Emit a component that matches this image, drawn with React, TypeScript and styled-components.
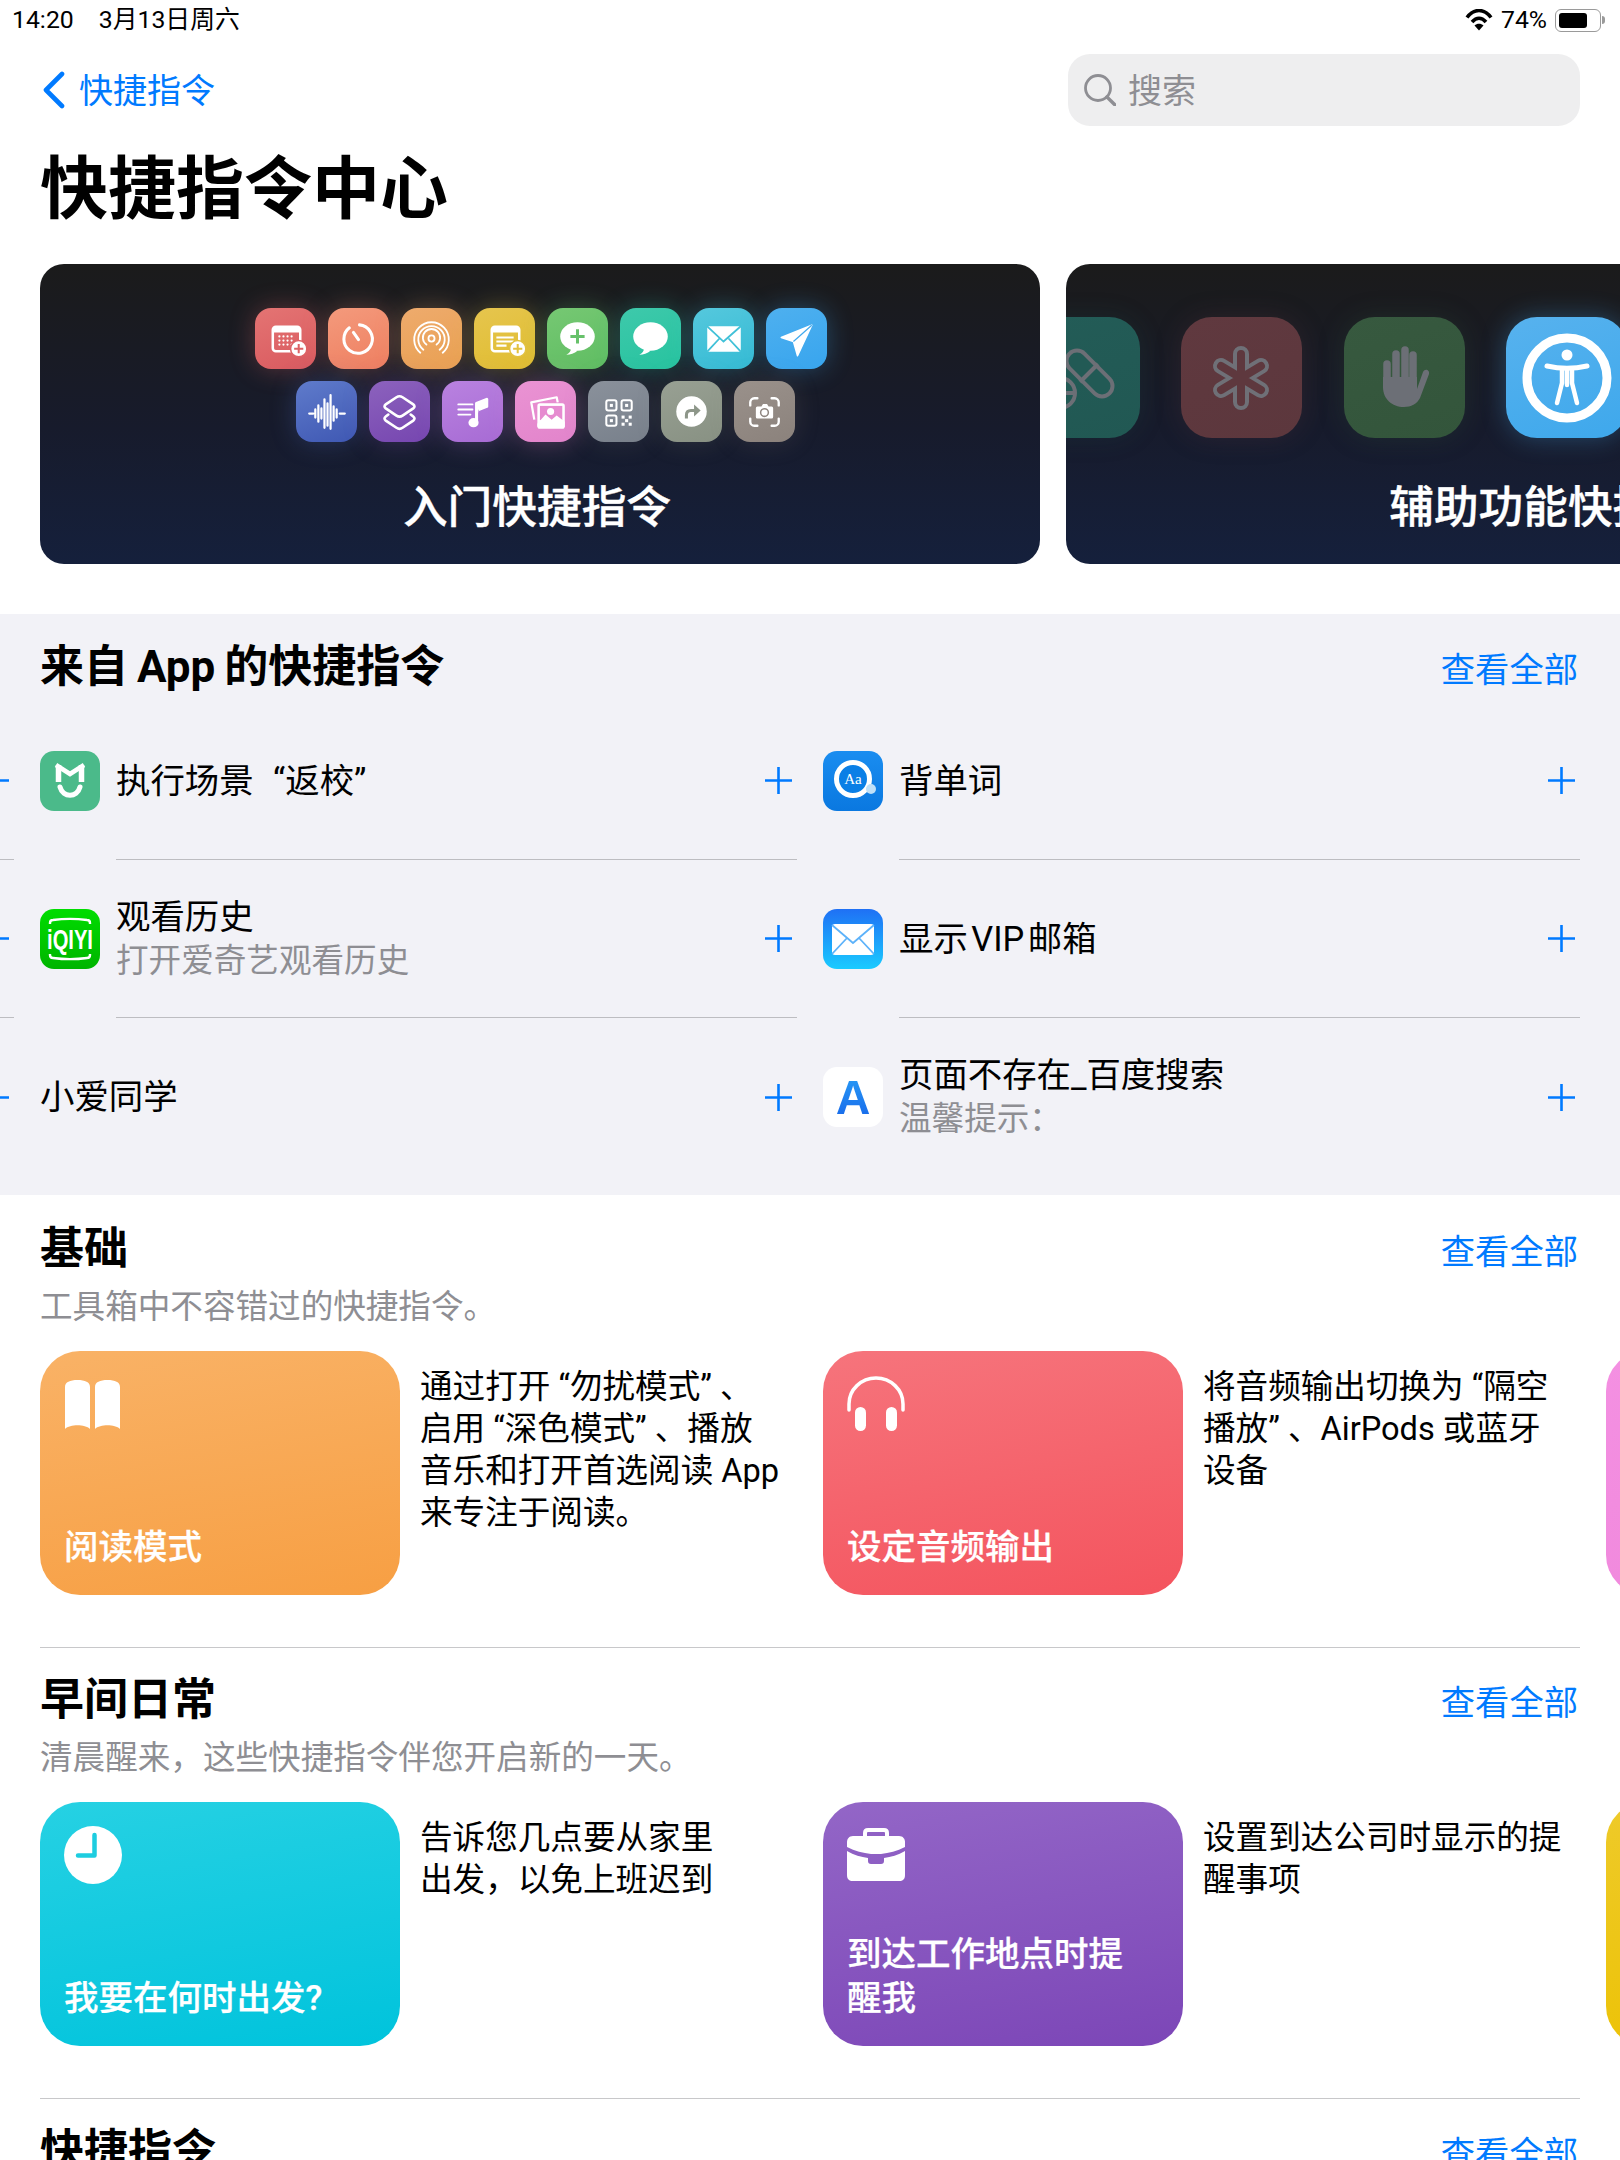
import styled, { createGlobalStyle } from "styled-components";
import type { ReactNode } from "react";

const FONT = `"Roboto", "Noto Sans CJK SC", sans-serif`;
const BLUE = "#007aff";

const GlobalStyle = createGlobalStyle`
  html, body { margin: 0; padding: 0; background: #fff; }
  body { font-family: ${FONT}; color: #000; }
  * { box-sizing: border-box; }
`;

/* ---------- small tile glyphs (60 x 60) ---------- */

const Glyph = ({ children, vb = 60 }: { children: ReactNode; vb?: number }) => (
  <svg width="100%" height="100%" viewBox={`0 0 ${vb} ${vb}`} fill="none" stroke="none">
    {children}
  </svg>
);

const CalendarPlus = () => (
  <Glyph>
    <rect x="17.5" y="18.5" width="27" height="24" rx="3" stroke="#fff" strokeWidth="2.5" />
    <path d="M17 22a4 4 0 0 1 4-4h20a4 4 0 0 1 4 4v2H17z" fill="#fff" />
    {[24, 28, 32, 36].map((x) =>
      [28, 32, 36].map((y) => <circle key={`${x}-${y}`} cx={x} cy={y} r="1.1" fill="#fff" />)
    )}
    <circle cx="43" cy="40" r="8" fill="#fff" stroke="#dd6265" strokeWidth="1.5" />
    <path d="M43 35.5v9M38.5 40h9" stroke="#dd6265" strokeWidth="2" />
  </Glyph>
);

const Timer = () => (
  <Glyph>
    <path d="M31 16.6A14 14 0 1 1 21 19.5" stroke="#fff" strokeWidth="3" strokeLinecap="round" />
    <path d="M30 31l-5-7" stroke="#fff" strokeWidth="3" strokeLinecap="round" />
  </Glyph>
);

const Airdrop = () => (
  <Glyph>
    <circle cx="30" cy="30" r="3" stroke="#fff" strokeWidth="1.8" />
    <path d="M25 36a8.5 8.5 0 1 1 10 0" stroke="#fff" strokeWidth="1.8" strokeLinecap="round" />
    <path d="M22 41a13 13 0 1 1 16 0" stroke="#fff" strokeWidth="1.8" strokeLinecap="round" />
    <path d="M19 44a17 17 0 1 1 22 0" stroke="#fff" strokeWidth="1.8" strokeLinecap="round" />
  </Glyph>
);

const NotePlus = () => (
  <Glyph>
    <rect x="17.5" y="18.5" width="27" height="24" rx="3" stroke="#fff" strokeWidth="2.5" />
    <path d="M17 22a4 4 0 0 1 4-4h20a4 4 0 0 1 4 4v2H17z" fill="#fff" />
    <path d="M22 29h17M22 33h17M22 37h10" stroke="#fff" strokeWidth="2" />
    <circle cx="43" cy="40" r="8" fill="#fff" stroke="#e3c23f" strokeWidth="1.5" />
    <path d="M43 35.5v9M38.5 40h9" stroke="#e3c23f" strokeWidth="2" />
  </Glyph>
);

const Bubble = ({ plus }: { plus?: boolean }) => (
  <Glyph>
    <ellipse cx="30" cy="28" rx="17" ry="14" fill="#fff" />
    <path d="M24 39c-.5 3-2 5.500-5 7 4 0 8-1.500 11-4z" fill="#fff" />
    {plus && <path d="M30 21v14M23 28h14" stroke="#67c16a" strokeWidth="3" />}
  </Glyph>
);

const Envelope = () => (
  <Glyph>
    <rect x="14" y="18" width="33" height="25" rx="1.500" fill="#fff" />
    <path d="M14 18l16 15 17-15M14 43l12-13M47 43L35 30" stroke="#41c1d8" strokeWidth="1.800" />
  </Glyph>
);

const Plane = () => (
  <Glyph>
    <path d="M45 17L15 29l12 4 4 14z" fill="#fff" stroke="#fff" strokeWidth="1.500" strokeLinejoin="round" />
    <path d="M45 17L27 33" stroke="#40a9ee" strokeWidth="1.200" />
  </Glyph>
);

const Waveform = () => (
  <Glyph>
    <path
      d="M13 32h4M19 28v8M22 24v16M25 27v10M28 18v28M31 22v22M34 14v33M37 25v14M40 28v8M43 32h5"
      stroke="#fff"
      strokeWidth="2.200"
      strokeLinecap="round"
    />
  </Glyph>
);

const Layers = () => (
  <Glyph>
    <path
      d="M19 33l-2.500 2Q14 37 16.500 39L27 46Q30 48 33 46L43.500 39Q46 37 43.500 35L41 33"
      stroke="#fff"
      strokeWidth="2.600"
      strokeLinecap="round"
    />
    <path
      d="M27 16Q30 14 33 16L43.500 23Q46 25 43.500 27L33 34Q30 36 27 34L16.500 27Q14 25 16.500 23Z"
      stroke="#fff"
      strokeWidth="2.600"
    />
  </Glyph>
);

const MusicList = () => (
  <Glyph>
    <path d="M16 23h14M16 28h14M16 33h12" stroke="#fff" strokeWidth="1.800" strokeLinecap="round" />
    <path d="M34 40V22l10-4v7l-8 3" stroke="#fff" strokeWidth="3" strokeLinejoin="round" fill="#fff" />
    <ellipse cx="31" cy="41" rx="5" ry="4.500" fill="#fff" />
  </Glyph>
);

const Photos = () => (
  <Glyph>
    <path d="M19 38l-3-17 25-5 1 5" stroke="#fff" strokeWidth="2.200" strokeLinejoin="round" />
    <rect x="22" y="22" width="27" height="25" rx="2.500" fill="#fff" />
    <rect x="24.500" y="24.500" width="22" height="14" fill="#e68bd0" />
    <path d="M22 42l8-9 6 5 5-4 8 6v5H22z" fill="#fff" />
    <circle cx="35" cy="30" r="3.500" fill="#fff" />
  </Glyph>
);

const QrCode = () => (
  <Glyph>
    <g stroke="#fff" strokeWidth="2">
      <rect x="18" y="19" width="10" height="10" rx="2" />
      <rect x="33" y="19" width="10" height="10" rx="2" />
      <rect x="18" y="34" width="10" height="10" rx="2" />
    </g>
    <g fill="#fff">
      <rect x="21.500" y="22.500" width="3" height="3" />
      <rect x="36.500" y="22.500" width="3" height="3" />
      <rect x="21.500" y="37.500" width="3" height="3" />
      <rect x="33" y="34" width="3" height="3" />
      <rect x="40" y="34" width="3" height="3" />
      <rect x="36.500" y="37.500" width="3" height="3" />
      <rect x="33" y="41" width="3" height="3" />
      <rect x="40" y="41" width="3" height="3" />
    </g>
  </Glyph>
);

const ShareCircle = () => (
  <Glyph>
    <circle cx="30" cy="30" r="15" fill="#fff" />
    <path d="M25 37v-3.500c0-3 2-4.500 4.500-4.500H36" stroke="#8d9689" strokeWidth="3" />
    <path d="M32.500 23l6.500 6-6.500 6z" fill="#8d9689" />
  </Glyph>
);

const FaceCamera = () => (
  <Glyph>
    <path
      d="M16 24v-3a4 4 0 0 1 4-4h3M37 17h3a4 4 0 0 1 4 4v3M44 37v3a4 4 0 0 1-4 4h-3M23 44h-3a4 4 0 0 1-4-4v-3"
      stroke="#fff"
      strokeWidth="2.300"
      strokeLinecap="round"
    />
    <path d="M23 25h4l1.500-2.500h4L34 25h3a1.500 1.500 0 0 1 1.500 1.500v9A1.500 1.500 0 0 1 37 37H23a1.500 1.500 0 0 1-1.500-1.500v-9A1.500 1.500 0 0 1 23 25z" fill="#fff" />
    <circle cx="30" cy="31" r="3.800" fill="none" stroke="#8f8680" strokeWidth="1.500" />
  </Glyph>
);

/* ---------- large tile glyphs (121 x 121) ---------- */

const Pills = () => (
  <Glyph vb={121}>
    <path d="M58 44l25 25" stroke="#6c6f76" strokeWidth="25" strokeLinecap="round" />
    <path d="M58 44l25 25" stroke="#225a55" strokeWidth="17" strokeLinecap="round" />
    <path d="M61 65l18-18" stroke="#6c6f76" strokeWidth="4" />
    <circle cx="41" cy="76" r="15" stroke="#6c6f76" strokeWidth="4" />
    <path d="M30 76h24" stroke="#6c6f76" strokeWidth="4" />
  </Glyph>
);

const Asterisk = () => {
  const arms = "M60 37v48M40 49l40 24M40 73l40-24";
  return (
    <Glyph vb={121}>
      <path d={arms} stroke="#6f7077" strokeWidth="16" strokeLinecap="round" />
      <path d={arms} stroke="#5e383e" strokeWidth="8" strokeLinecap="round" />
    </Glyph>
  );
};

const Hand = () => (
  <Glyph vb={121}>
    <path d="M43 65V47M52 60V37M61 60V33M69 62V38" stroke="#6c6f76" strokeWidth="7.500" strokeLinecap="round" />
    <path d="M39 60h34v12l6-17c2-4 7-2 6 2l-9 24c-3 6-9 9-16 9-12 0-21-8-21-20z" fill="#6c6f76" />
  </Glyph>
);

const Accessibility = () => (
  <Glyph vb={121}>
    <circle cx="61" cy="61" r="40" stroke="#fff" strokeWidth="9" />
    <circle cx="61" cy="38" r="5.500" fill="#fff" />
    <path d="M41 49c13 3 27 3 40 0" stroke="#fff" strokeWidth="5" strokeLinecap="round" />
    <path d="M61 52v16M56 52v14l-5 20M66 52v14l5 20" stroke="#fff" strokeWidth="4.500" strokeLinecap="round" />
  </Glyph>
);

/* ---------- app icons (60 x 60) ---------- */

const MiHomeGlyph = () => (
  <Glyph>
    <path d="M16 14l14 9 14-9" stroke="#fff" strokeWidth="4.500" />
    <path d="M18.500 14v17M41.500 14v17" stroke="#fff" strokeWidth="5.500" />
    <path d="M20 36c3 11 17 11 20 0" stroke="#fff" strokeWidth="5" strokeLinecap="round" />
  </Glyph>
);

const IqiyiGlyph = () => (
  <Glyph>
    <path d="M10 15v-1c0-2 1-3 3-3 11-1.500 23-1.500 34 0 2 0 3 1 3 3v1" stroke="#fff" strokeWidth="2.400" />
    <path d="M10 45v1c0 2 1 3 3 3 11 1.500 23 1.500 34 0 2 0 3-1 3-3v-1" stroke="#fff" strokeWidth="2.400" />
    <text
      transform="translate(30 40) scale(.72 1)"
      textAnchor="middle"
      fontFamily="Liberation Sans, sans-serif"
      fontWeight="700"
      fontSize="28"
      fill="#fff"
    >
      iQIYI
    </text>
  </Glyph>
);

const DictGlyph = () => (
  <Glyph>
    <circle cx="30" cy="28" r="16.500" fill="#0a7fe6" stroke="#fff" strokeWidth="5" />
    <circle cx="48" cy="38" r="5" fill="#bfe0f8" />
    <text x="30" y="33" textAnchor="middle" fontFamily="Liberation Serif, serif" fontSize="15" fill="#fff">
      Aa
    </text>
  </Glyph>
);

const MailGlyph = () => (
  <Glyph>
    <rect x="9" y="15" width="42" height="31" rx="3" fill="#fff" />
    <path d="M9 16l21 18 21-18M9 45l15-16M51 45L36 29" stroke="#5cb2fa" strokeWidth="1.800" />
  </Glyph>
);

/* ---------- card glyphs (58 x 58) ---------- */

const Book = () => (
  <Glyph vb={58}>
    <path d="M1 12C1 7 6 5 13.500 5S26 7 26 12v42c-5-5-20-5-25 0z" fill="#fff" />
    <path d="M31 12c0-5 5-7 12.500-7S56 7 56 12v42c-5-5-20-5-25 0z" fill="#fff" />
  </Glyph>
);

const Headphones = () => (
  <Glyph vb={58}>
    <path d="M2 35V29a27 26 0 0 1 54 0v6" stroke="#fff" strokeWidth="3.500" strokeLinecap="round" />
    <rect x="8" y="32" width="11" height="24" rx="5.500" fill="#fff" />
    <rect x="39" y="32" width="11" height="24" rx="5.500" fill="#fff" />
  </Glyph>
);

const Clock = () => (
  <Glyph vb={58}>
    <circle cx="29" cy="29" r="29" fill="#fff" />
    <path d="M30.500 9v20.500H14" stroke="#1dcde0" strokeWidth="4.500" strokeLinecap="round" strokeLinejoin="round" />
  </Glyph>
);

const Briefcase = () => (
  <Glyph vb={58}>
    <path d="M18 14V7c0-2 1-3 3-3h16c2 0 3 1 3 3v7" stroke="#fff" strokeWidth="4" />
    <path d="M0 16c0-3 2-6 6-6h46c4 0 6 3 6 6v5c-8 4-16 6-24 7h-10C16 27 8 25 0 21z" fill="#fff" />
    <path d="M0 25c7 4 14 6 21 7v3c0 2 1 3 3 3h10c2 0 3-1 3-3v-3c7-1 14-3 21-7v24c0 4-2 6-6 6H6c-4 0-6-2-6-6z" fill="#fff" />
  </Glyph>
);

/* ---------- status bar ---------- */

const StatusBar = styled.div`
  height: 40px;
  padding: 0 12px;
  display: flex;
  align-items: center;
  justify-content: space-between;
  font-size: 24.8px;
  line-height: 28px;
`;
const StatusGroup = styled.div`
  display: flex;
  align-items: center;
  gap: 8px;
`;
const DateGroup = styled.div`
  display: flex;
  align-items: baseline;
  gap: 25px;
`;
const Battery = styled.div`
  position: relative;
  width: 46px;
  height: 23px;
  padding: 3px;
  border: 1.5px solid #9a9a9a;
  border-radius: 6px;
  margin-right: 7px;
  &::after {
    content: "";
    position: absolute;
    right: -5px;
    top: 6px;
    width: 3px;
    height: 8px;
    border-radius: 0 3px 3px 0;
    background: #9a9a9a;
  }
`;
const BatteryFill = styled.div<{ $level: number }>`
  width: ${(p) => p.$level}%;
  height: 100%;
  border-radius: 3px;
  background: #000;
`;

/* ---------- navigation ---------- */

const NavBar = styled.div`
  margin-top: 14px;
  padding: 0 40px;
  height: 72px;
  display: flex;
  align-items: center;
  justify-content: space-between;
`;
const BackLink = styled.div`
  display: flex;
  align-items: center;
  gap: 13px;
  padding-left: 2px;
  color: ${BLUE};
  font-size: 34px;
`;
const NavText = styled.span`
  padding-bottom: 3px;
`;
const SearchBox = styled.div`
  width: 512px;
  height: 72px;
  border-radius: 22px;
  background: #eeeeef;
  display: flex;
  align-items: center;
  gap: 12px;
  padding-left: 16px;
  color: #8e8e93;
  font-size: 34px;
`;
const PageTitle = styled.h1`
  margin: 24px 0 34px;
  padding-left: 40px;
  font-size: 68px;
  line-height: 80px;
  font-weight: 700;
`;

/* ---------- banners ---------- */

const BannerRow = styled.div`
  display: flex;
  gap: 26px;
  padding-left: 40px;
  margin-bottom: 50px;
`;
const Banner = styled.div<{ $top: number }>`
  flex: 0 0 1000px;
  height: 300px;
  border-radius: 24px;
  overflow: hidden;
  padding-top: ${(p) => p.$top}px;
  display: flex;
  flex-direction: column;
  align-items: center;
  background: linear-gradient(180deg, #1b1b1b 0%, #171b2c 55%, #15203c 100%);
`;
const TileRow = styled.div<{ $gap: number; $shift?: number }>`
  display: flex;
  justify-content: center;
  gap: ${(p) => p.$gap}px;
  margin-left: ${(p) => p.$shift ?? 0}px;
  margin-bottom: 12px;
`;
const Tile = styled.div<{ $from: string; $to: string; $size: number; $glow: string }>`
  flex: none;
  width: ${(p) => p.$size}px;
  height: ${(p) => p.$size}px;
  border-radius: ${(p) => Math.round(p.$size * 0.26)}px;
  background: linear-gradient(160deg, ${(p) => p.$from}, ${(p) => p.$to});
  box-shadow: 0 0 26px ${(p) => p.$glow};
`;
const BannerTitle = styled.div<{ $top: number; $shift: number }>`
  flex: none;
  margin-top: ${(p) => p.$top}px;
  margin-left: ${(p) => p.$shift}px;
  color: #fff;
  font-size: 44.7px;
  line-height: 56px;
  font-weight: 500;
  -webkit-text-stroke: 0.35px #fff;
  white-space: nowrap;
`;

/* ---------- shared section parts ---------- */

const SectionHead = styled.div`
  display: flex;
  justify-content: space-between;
  align-items: flex-start;
  height: 44px;
`;
const SectionTitle = styled.h2`
  margin: 0;
  padding-top: 1px;
  font-size: 44px;
  line-height: 44px;
  font-weight: 700;
  word-spacing: -2px;
`;
const SeeAll = styled.span`
  padding: 4px 2px 0 0;
  color: ${BLUE};
  font-size: 34.3px;
  line-height: 44px;
`;

/* ---------- app shortcuts ---------- */

const AppSection = styled.section`
  height: 581px;
  padding-top: 30px;
  background: #f2f2f7;
  overflow: hidden;
`;
const AppHead = styled.div`
  padding: 0 40px;
  margin-bottom: 14px;
`;
const AppColumns = styled.div`
  display: flex;
  gap: 26px;
  margin-left: -743px;
`;
const AppColumn = styled.div`
  flex: 0 0 757px;
`;
const AppRow = styled.div`
  display: flex;
  align-items: center;
  height: 158px;
`;
const AppIcon = styled.div<{ $bg: string }>`
  flex: none;
  position: relative;
  width: 60px;
  height: 60px;
  margin-right: 16px;
  border-radius: 14px;
  background: ${(p) => p.$bg};
`;
const AppBody = styled.div<{ $last: boolean }>`
  flex: 1;
  height: 100%;
  display: flex;
  align-items: center;
  justify-content: space-between;
  padding-right: 5px;
  border-bottom: ${(p) => (p.$last ? "none" : "1px solid #bdbdc1")};
`;
const AppName = styled.div<{ $wordGap: number }>`
  font-size: 34.4px;
  line-height: 44px;
  word-spacing: ${(p) => p.$wordGap}px;
`;
const AppSub = styled.div`
  color: #8e8e93;
  font-size: 32.6px;
  line-height: 44px;
`;
const BaiduMark = styled.span`
  position: absolute;
  inset: 0;
  display: flex;
  align-items: center;
  justify-content: center;
  font-family: "Liberation Sans", sans-serif;
  font-size: 48px;
  font-weight: 700;
  color: transparent;
  background: linear-gradient(180deg, #2aa4f8, #1560e8);
  -webkit-background-clip: text;
  background-clip: text;
`;
const PlusIcon = () => (
  <svg width="27" height="27" viewBox="0 0 27 27" style={{ flex: "none" }}>
    <path d="M13.500 0v27M0 13.500h27" stroke={BLUE} strokeWidth="2.600" strokeLinecap="round" />
  </svg>
);

/* ---------- shortcut cards ---------- */

const CardSection = styled.section<{ $top: number }>`
  padding-top: ${(p) => p.$top}px;
`;
const CardHead = styled.div`
  padding: 0 40px;
`;
const CardIntro = styled.p`
  margin: 15px 0 22px;
  color: #8e8e93;
  font-size: 32.6px;
  line-height: 44px;
`;
const CardStrip = styled.div`
  display: flex;
  gap: 26px;
  padding-left: 40px;
  margin-bottom: 52px;
`;
const CardItem = styled.div`
  flex: 0 0 757px;
  display: flex;
  gap: 20px;
`;
const Card = styled.div<{ $from: string; $to: string }>`
  flex: none;
  width: 360px;
  height: 244px;
  padding: 24px 24px 26px;
  border-radius: 40px;
  background: linear-gradient(170deg, ${(p) => p.$from}, ${(p) => p.$to});
  display: flex;
  flex-direction: column;
  justify-content: space-between;
  color: #fff;
`;
const CardGlyph = styled.div`
  width: 58px;
  height: 58px;
`;
const CardName = styled.div`
  font-size: 34.5px;
  line-height: 44px;
  font-weight: 500;
  -webkit-text-stroke: 0.25px #fff;
  white-space: pre-line;
`;
const CardDesc = styled.div`
  padding-top: 15px;
  font-size: 32.6px;
  line-height: 42px;
  white-space: pre-line;
`;
const Divider = styled.div`
  height: 1px;
  margin: 0 40px;
  background: #c8c8ca;
`;

const Page = styled.div`
  width: 1620px;
  height: 2160px;
  overflow: hidden;
  background: #fff;
`;

/* ---------- data ---------- */

const introTilesTop = [
  { from: "#e47473", to: "#d95a5f", glow: "#e0656655", icon: <CalendarPlus /> },
  { from: "#f49a7c", to: "#ee7f61", glow: "#ee876a55", icon: <Timer /> },
  { from: "#eeab6d", to: "#e9a052", glow: "#eba55f55", icon: <Airdrop /> },
  { from: "#e6c54e", to: "#e0bd30", glow: "#e3c23f55", icon: <NotePlus /> },
  { from: "#76c873", to: "#5fbd62", glow: "#69c26a55", icon: <Bubble plus /> },
  { from: "#3ec9ab", to: "#27c39f", glow: "#2fc6a555", icon: <Bubble /> },
  { from: "#55c8dd", to: "#35bbd4", glow: "#41c1d855", icon: <Envelope /> },
  { from: "#4eb0ef", to: "#38a5ee", glow: "#40a9ee55", icon: <Plane /> },
];

const introTilesBottom = [
  { from: "#5f7bcb", to: "#3f58b3", glow: "#4f6cc455", icon: <Waveform /> },
  { from: "#8c62bd", to: "#7646b0", glow: "#7f55b555", icon: <Layers /> },
  { from: "#b982e0", to: "#a76bd4", glow: "#af78d955", icon: <MusicList /> },
  { from: "#ea93d3", to: "#e284cb", glow: "#e68bd055", icon: <Photos /> },
  { from: "#8a919b", to: "#78808b", glow: "#7f879233", icon: <QrCode /> },
  { from: "#98a093", to: "#889183", glow: "#8d968933", icon: <ShareCircle /> },
  { from: "#9a918b", to: "#8b827c", glow: "#8f868033", icon: <FaceCamera /> },
];

const accessTiles = [
  { from: "#235c57", to: "#215853", glow: "#225a5533", icon: <Pills /> },
  { from: "#60393f", to: "#5c373d", glow: "#5e383e44", icon: <Asterisk /> },
  { from: "#37593f", to: "#33553b", glow: "#36573d44", icon: <Hand /> },
  { from: "#57b2ee", to: "#3ea8ec", glow: "#44a9ea55", icon: <Accessibility /> },
  { from: "#4b4a70", to: "#45456a", glow: "#4b4a7033", icon: null },
  { from: "#5a4d3a", to: "#544735", glow: "#5a4d3a33", icon: null },
  { from: "#2f4a62", to: "#2b465e", glow: "#2f4a6233", icon: null },
];

type AppEntry = { name: string; sub?: string; bg?: string; icon?: ReactNode; wordGap?: number };

const previousColumn: AppEntry[] = [{ name: "" }, { name: "" }, { name: "" }];
const firstColumn: AppEntry[] = [
  { name: "执行场景 “返校”", bg: "#4bba8a", icon: <MiHomeGlyph />, wordGap: 11 },
  {
    name: "观看历史",
    sub: "打开爱奇艺观看历史",
    bg: "linear-gradient(180deg, #00dd00, #00b400)",
    icon: <IqiyiGlyph />,
  },
  { name: "小爱同学" },
];
const secondColumn: AppEntry[] = [
  { name: "背单词", bg: "linear-gradient(180deg, #1a8df0, #0a78e0)", icon: <DictGlyph /> },
  { name: "显示 VIP 邮箱", bg: "linear-gradient(180deg, #1f70f5, #1acbff)", icon: <MailGlyph />, wordGap: -5 },
  { name: "页面不存在_百度搜索", sub: "温馨提示：", bg: "#fff", icon: <BaiduMark>A</BaiduMark> },
];

const basics = [
  {
    from: "#f9b266",
    to: "#f79f43",
    name: "阅读模式",
    icon: <Book />,
    desc: "通过打开 “勿扰模式” 、\n启用 “深色模式” 、播放\n音乐和打开首选阅读 App\n来专注于阅读。",
  },
  {
    from: "#f6747c",
    to: "#f4545e",
    name: "设定音频输出",
    icon: <Headphones />,
    desc: "将音频输出切换为 “隔空\n播放” 、AirPods 或蓝牙\n设备",
  },
  { from: "#f490e2", to: "#f088dc", name: "", icon: null, desc: "" },
];

const mornings = [
  {
    from: "#26d1e3",
    to: "#00c3dc",
    name: "我要在何时出发?",
    icon: <Clock />,
    desc: "告诉您几点要从家里\n出发，以免上班迟到",
  },
  {
    from: "#9366c7",
    to: "#7c46b7",
    name: "到达工作地点时提\n醒我",
    icon: <Briefcase />,
    desc: "设置到达公司时显示的提\n醒事项",
  },
  { from: "#eeca2a", to: "#ecc100", name: "", icon: null, desc: "" },
];

type CardEntry = (typeof basics)[number];

const AppList = ({ items }: { items: AppEntry[] }) => (
  <AppColumn>
    {items.map((item, i) => (
      <AppRow key={i}>
        {item.bg && <AppIcon $bg={item.bg}>{item.icon}</AppIcon>}
        <AppBody $last={i === items.length - 1}>
          <div>
            <AppName $wordGap={item.wordGap ?? 0}>{item.name}</AppName>
            {item.sub && <AppSub>{item.sub}</AppSub>}
          </div>
          <PlusIcon />
        </AppBody>
      </AppRow>
    ))}
  </AppColumn>
);

const CardRow = ({ items }: { items: CardEntry[] }) => (
  <CardStrip>
    {items.map((item, i) => (
      <CardItem key={i}>
        <Card $from={item.from} $to={item.to}>
          <CardGlyph>{item.icon}</CardGlyph>
          <CardName>{item.name}</CardName>
        </Card>
        <CardDesc>{item.desc}</CardDesc>
      </CardItem>
    ))}
  </CardStrip>
);

const App = () => {
  return (
    <Page>
      <GlobalStyle />
      <StatusBar>
        <DateGroup>
          <span>14:20</span>
          <span>3月13日周六</span>
        </DateGroup>
        <StatusGroup>
          <svg width="28" height="22" viewBox="0 0 28 22" fill="none">
            <path d="M2 8.500C9-.8 19-.8 26 8.500" stroke="#000" strokeWidth="3.600" />
            <path d="M7 13c4.500-5 9.500-5 14 0" stroke="#000" strokeWidth="3.600" />
            <path d="M14 21.500l-4.500-5c2.500-2.400 6.500-2.400 9 0z" fill="#000" />
          </svg>
          <span>74%</span>
          <Battery>
            <BatteryFill $level={74} />
          </Battery>
        </StatusGroup>
      </StatusBar>

      <NavBar>
        <BackLink>
          <svg width="24" height="38" viewBox="0 0 24 38" fill="none">
            <path d="M20 3L4 19l16 16" stroke={BLUE} strokeWidth="4.600" strokeLinecap="round" strokeLinejoin="round" />
          </svg>
          <NavText>快捷指令</NavText>
        </BackLink>
        <SearchBox>
          <svg width="32" height="32" viewBox="0 0 32 32" fill="none">
            <circle cx="14" cy="14" r="12.500" stroke="#8e8e93" strokeWidth="2.800" />
            <path d="M23 23l8 8" stroke="#8e8e93" strokeWidth="3.400" strokeLinecap="round" />
          </svg>
          <NavText>搜索</NavText>
        </SearchBox>
      </NavBar>

      <PageTitle>快捷指令中心</PageTitle>

      <BannerRow>
        <Banner $top={44}>
          <TileRow $gap={12} $shift={1}>
            {introTilesTop.map((t, i) => (
              <Tile key={i} $from={t.from} $to={t.to} $size={61} $glow={t.glow}>
                {t.icon}
              </Tile>
            ))}
          </TileRow>
          <TileRow $gap={12} $shift={10}>
            {introTilesBottom.map((t, i) => (
              <Tile key={i} $from={t.from} $to={t.to} $size={61} $glow={t.glow}>
                {t.icon}
              </Tile>
            ))}
          </TileRow>
          <BannerTitle $top={26} $shift={-6}>入门快捷指令</BannerTitle>
        </Banner>
        <Banner $top={53}>
          <TileRow $gap={41.5} $shift={1}>
            {accessTiles.map((t, i) => (
              <Tile key={i} $from={t.from} $to={t.to} $size={121} $glow={t.glow}>
                {t.icon}
              </Tile>
            ))}
          </TileRow>
          <BannerTitle $top={30} $shift={4}>辅助功能快捷指令</BannerTitle>
        </Banner>
      </BannerRow>

      <AppSection>
        <AppHead>
          <SectionHead>
            <SectionTitle>来自 App 的快捷指令</SectionTitle>
            <SeeAll>查看全部</SeeAll>
          </SectionHead>
        </AppHead>
        <AppColumns>
          <AppList items={previousColumn} />
          <AppList items={firstColumn} />
          <AppList items={secondColumn} />
        </AppColumns>
      </AppSection>

      <CardSection $top={31}>
        <CardHead>
          <SectionHead>
            <SectionTitle>基础</SectionTitle>
            <SeeAll>查看全部</SeeAll>
          </SectionHead>
          <CardIntro>工具箱中不容错过的快捷指令。</CardIntro>
        </CardHead>
        <CardRow items={basics} />
      </CardSection>
      <Divider />

      <CardSection $top={29}>
        <CardHead>
          <SectionHead>
            <SectionTitle>早间日常</SectionTitle>
            <SeeAll>查看全部</SeeAll>
          </SectionHead>
          <CardIntro>清晨醒来，这些快捷指令伴您开启新的一天。</CardIntro>
        </CardHead>
        <CardRow items={mornings} />
      </CardSection>
      <Divider />

      <CardSection $top={29}>
        <CardHead>
          <SectionHead>
            <SectionTitle>快捷指令</SectionTitle>
            <SeeAll>查看全部</SeeAll>
          </SectionHead>
        </CardHead>
      </CardSection>
    </Page>
  );
};

export default App;
